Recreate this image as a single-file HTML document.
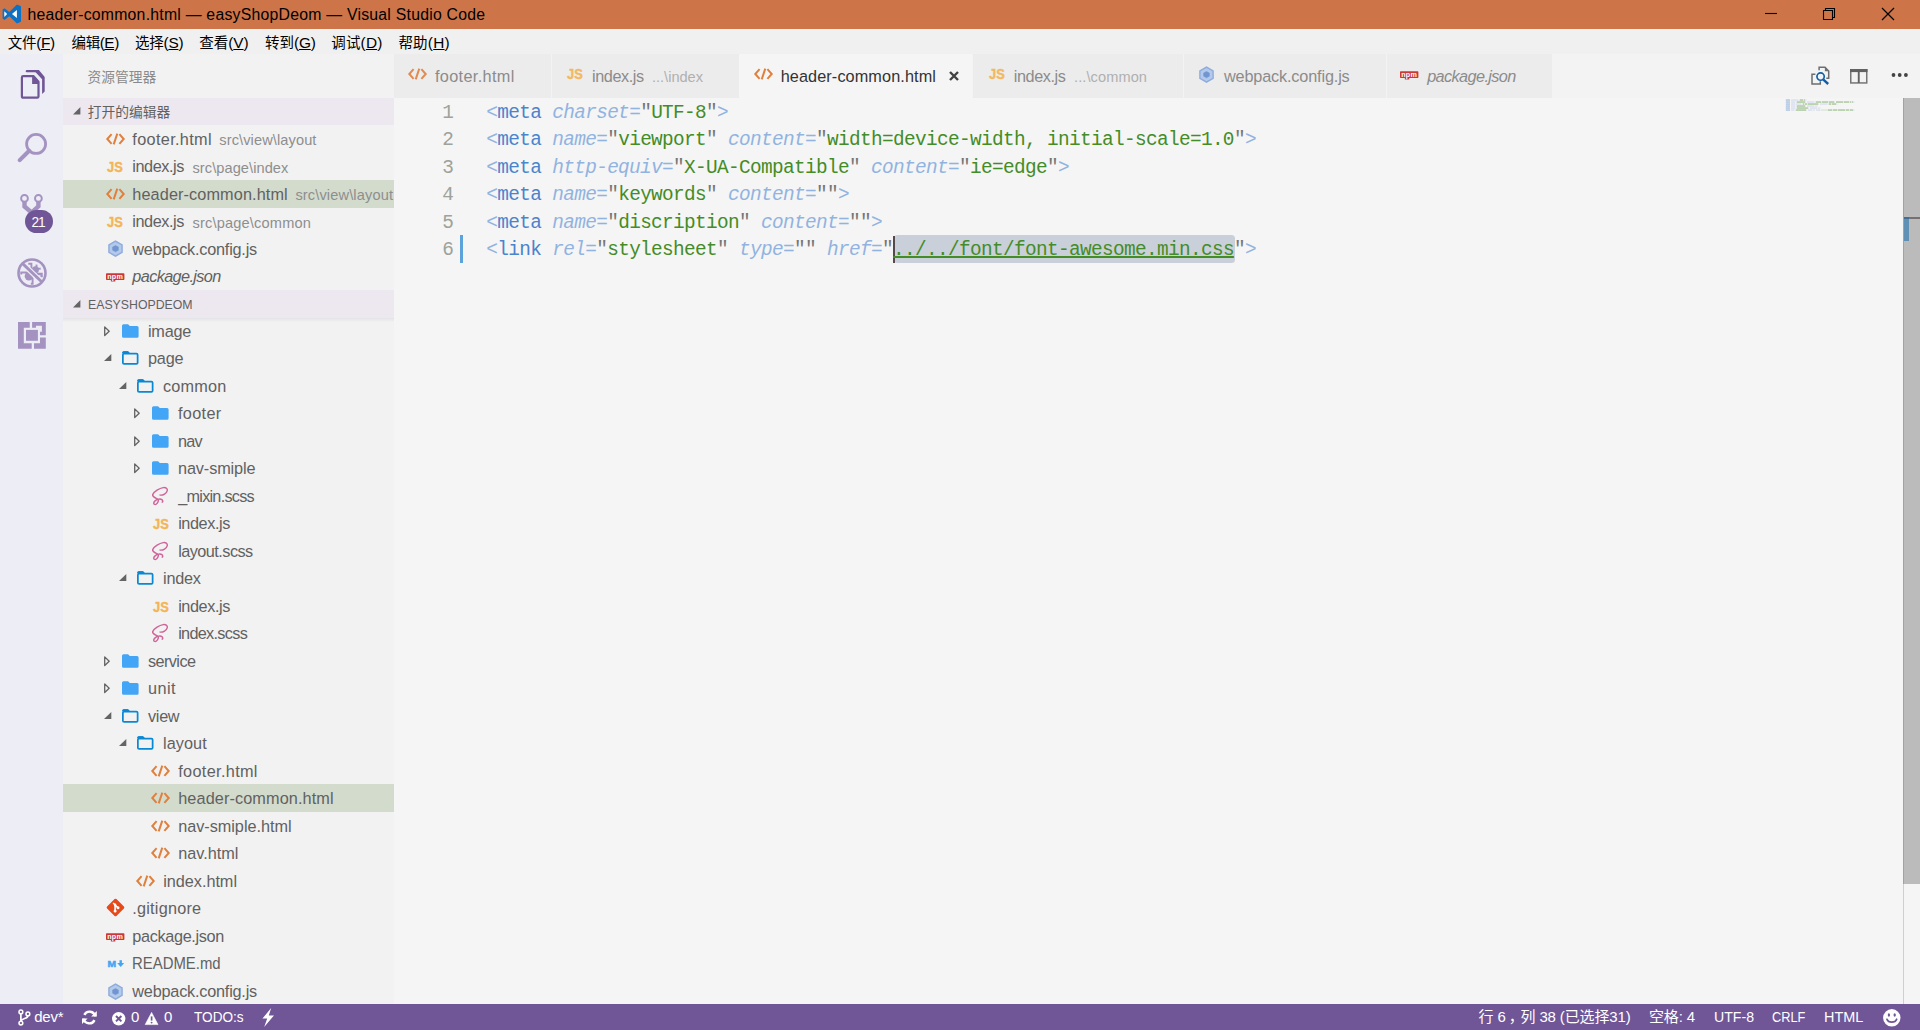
<!DOCTYPE html>
<html lang="zh-CN"><head><meta charset="utf-8"><title>header-common.html — easyShopDeom — Visual Studio Code</title>
<style>
html,body{margin:0;padding:0;}
body{width:1920px;height:1030px;overflow:hidden;position:relative;background:#f5f5f5;font-family:'Liberation Sans','Noto Sans CJK SC',sans-serif;}
.t{position:absolute;white-space:pre;line-height:1;}
svg{overflow:visible;display:block;}
u{text-decoration:underline;text-underline-offset:1px;}
</style></head><body>
<div style="position:absolute;left:0px;top:0px;width:1920px;height:29px;background:#cd7549;"></div>
<div style="position:absolute;left:0px;top:29px;width:1920px;height:25px;background:#f0f0f0;"></div>
<div style="position:absolute;left:0px;top:54px;width:63px;height:950px;background:#ededf5;"></div>
<div style="position:absolute;left:63px;top:54px;width:331px;height:950px;background:#f2f2f2;"></div>
<div style="position:absolute;left:394px;top:54px;width:1526px;height:44px;background:#f3f3f3;"></div>
<div style="position:absolute;left:394px;top:98px;width:1526px;height:906px;background:#f5f5f5;"></div>
<svg style="position:absolute;left:0px;top:0px;" width="24" height="28" viewBox="0 0 24 28"><path d="M16.9 4.5 L21 6.2 V21.7 L16.9 23.4 L9.3 16.2 L4.5 19.9 L2.6 18.6 V9.5 L4.5 8.2 L9.3 11.9 Z" fill="#0e72c4"/><path d="M16.9 10 V18 L12 14 Z M4.3 11.3 V16.9 L7.1 14.1 Z" fill="#fff"/></svg>
<svg style="position:absolute;left:1764px;top:7px;" width="14" height="14" viewBox="0 0 14 14"><path d="M1 6.5 H13" stroke="#000" stroke-width="1.1" fill="none"/></svg>
<svg style="position:absolute;left:1822px;top:7px;" width="14" height="14" viewBox="0 0 14 14"><path d="M1.5 3.5 H10.5 V12.5 H1.5 Z M3.5 3.5 V1.5 H12.5 V10.5 H10.5" stroke="#000" stroke-width="1.1" fill="none"/></svg>
<svg style="position:absolute;left:1881px;top:7px;" width="14" height="14" viewBox="0 0 14 14"><path d="M1 1 L13 13 M13 1 L1 13" stroke="#000" stroke-width="1.2" fill="none"/></svg>
<svg style="position:absolute;left:20px;top:69px;" width="26" height="31" viewBox="0 0 26 31"><path d="M6.8 2.2 H17" fill="none" stroke="#705697" stroke-width="2.2" stroke-linecap="round"/><path d="M15.6 1.1 H18.9 L24.7 7.9 V22.4 L22.1 24.9 V10.3 L15.6 3.3 Z" fill="#705697"/><path d="M3.2 7.1 H13.6 L18.5 12.7 V27.4 Q18.5 28.65 17.2 28.65 H3.2 Q1.9 28.65 1.9 27.4 V8.4 Q1.9 7.1 3.2 7.1 Z" fill="none" stroke="#705697" stroke-width="2.2" stroke-linejoin="round"/><path d="M12.1 7 H13.8 L19 12.8 V14.9 H12.1 Z" fill="#705697"/></svg>
<svg style="position:absolute;left:16px;top:132px;" width="32" height="32" viewBox="0 0 32 32"><circle cx="20.1" cy="11.95" r="9.5" fill="none" stroke="#a492c1" stroke-width="2.8"/><path d="M13.2 18.8 L3.7 28.1" stroke="#a492c1" stroke-width="4.1" stroke-linecap="round"/></svg>
<svg style="position:absolute;left:16px;top:190px;" width="32" height="32" viewBox="0 0 32 32"><path d="M8.5 11.6 V16.4 L15.6 22.6 V26 M22.4 11.6 V16.4 L15.6 22.6" fill="none" stroke="#a492c1" stroke-width="4.4" stroke-linejoin="miter"/><circle cx="8.5" cy="8.4" r="3.4" fill="#ededf5" stroke="#a492c1" stroke-width="1.9"/><circle cx="22.4" cy="8.4" r="3.4" fill="#ededf5" stroke="#a492c1" stroke-width="1.9"/></svg>
<div style="position:absolute;left:25px;top:209.9px;width:28px;height:22.8px;border-radius:11.4px;background:#705697;"></div>
<svg style="position:absolute;left:17px;top:257.8px;" width="30" height="30" viewBox="0 0 30 30"><g fill="none" stroke="#a492c1" stroke-width="1.9"><path d="M11.3 5.7 H14.4 V11"/><path d="M19.5 6.6 V10"/><path d="M20.2 10.7 H23.7"/><path d="M19.6 16 H24.6 V19.2" stroke-width="2.3"/><path d="M4.2 16.6 V14.5 H11"/><path d="M15.6 19.8 V25.7 H13.8"/></g><circle cx="11.9" cy="18.2" r="4.2" fill="#a492c1"/><circle cx="18.4" cy="11.8" r="3.5" fill="#a492c1"/><path d="M6 6 L24 23.4" stroke="#ededf5" stroke-width="5.4"/><path d="M5.4 5.4 L24.6 23.8" stroke="#a492c1" stroke-width="2.9"/><circle cx="15" cy="15" r="13.5" fill="none" stroke="#a492c1" stroke-width="2.6"/></svg>
<svg style="position:absolute;left:18.1px;top:322.1px;" width="27.8" height="26.7" viewBox="0 0 27.8 26.7"><path d="M0 0 H11.75 V5.8 H5.8 V21.15 H13.7 V26.7 H0 Z" fill="#a492c1"/><path d="M14.1 0 H27.8 V13.25 H22 V9.8 H23.9 V3.85 H17.95 V5.8 H14.1 Z" fill="#a492c1"/><path d="M22 15.4 H27.8 V26.7 H16 V21.15 H22 Z" fill="#a492c1"/><rect x="8" y="7.9" width="11.9" height="10.9" fill="#a492c1"/></svg>
<div style="position:absolute;left:63px;top:97.5px;width:331px;height:27.6px;background:#ede8ef;"></div>
<div style="position:absolute;left:63px;top:290px;width:331px;height:28px;background:#ede8ef;"></div>
<div style="position:absolute;left:63px;top:318px;width:331px;height:4px;background:linear-gradient(#e4e2e5,rgba(242,242,242,0));"></div>
<svg style="position:absolute;left:72.8px;top:107.4px;" width="8" height="8" viewBox="0 0 8 8"><path d="M7.4 0 V7.4 H0 Z" fill="#646465"/></svg>
<svg style="position:absolute;left:72.8px;top:299.6px;" width="8" height="8" viewBox="0 0 8 8"><path d="M7.4 0 V7.4 H0 Z" fill="#646465"/></svg>
<div style="position:absolute;left:63px;top:180px;width:331px;height:27.7px;background:#d3dbcd;"></div>
<svg style="position:absolute;left:105.6px;top:133.0px;" width="19" height="12" viewBox="0 0 19 12"><path d="M5.6 1.2 L1.3 6 L5.6 10.8 M13.4 1.2 L17.7 6 L13.4 10.8 M11.3 0.6 L7.7 11.4" fill="none" stroke="#e0803e" stroke-width="2" stroke-linejoin="miter"/></svg>
<svg style="position:absolute;left:105.6px;top:188.0px;" width="19" height="12" viewBox="0 0 19 12"><path d="M5.6 1.2 L1.3 6 L5.6 10.8 M13.4 1.2 L17.7 6 L13.4 10.8 M11.3 0.6 L7.7 11.4" fill="none" stroke="#e0803e" stroke-width="2" stroke-linejoin="miter"/></svg>
<svg style="position:absolute;left:107.6px;top:240.4px;" width="15" height="17.2" viewBox="0 0 15 17.2"><path d="M7.5 0.2 L14.8 4.4 V12.8 L7.5 17 L0.2 12.8 V4.4 Z" fill="#8eabdb"/><path d="M7.5 1.9 L13.4 5.3 V11.9 L7.5 15.3 L1.6 11.9 V5.3 Z" fill="#b4caeb"/><path d="M7.5 5.4 L10.4 7 V10.2 L7.5 11.8 L4.6 10.2 V7 Z" fill="#7195d3" stroke="#7195d3" stroke-width="0.5" stroke-linejoin="round"/></svg>
<svg style="position:absolute;left:105.6px;top:272.9px;" width="18.4" height="9" viewBox="0 0 19 9"><rect x="0" y="0" width="19" height="7.2" rx="0.8" fill="#cb3837"/><rect x="5" y="6.6" width="4.6" height="2" fill="#cb3837"/><text x="9.5" y="6.0" font-family="Liberation Sans,sans-serif" font-size="7.4" font-weight="bold" fill="#fff" text-anchor="middle" letter-spacing="0.3">npm</text></svg>
<div style="position:absolute;left:63px;top:784px;width:331px;height:28px;background:#d3dbcd;"></div>
<svg style="position:absolute;left:104.2px;top:326.0px;" width="6" height="11" viewBox="0 0 6 11"><path d="M0.7 0.9 L5.2 5.2 L0.7 9.5 Z" fill="none" stroke="#646465" stroke-width="1.3" stroke-linejoin="round"/></svg>
<svg style="position:absolute;left:121.69999999999999px;top:324.2px;" width="16.6" height="14" viewBox="0 0 17 14"><path d="M1.6 0 H6.2 L8 1.9 H15.4 Q17 1.9 17 3.5 V12.4 Q17 14 15.4 14 H1.6 Q0 14 0 12.4 V1.6 Q0 0 1.6 0 Z" fill="#42a5f5"/></svg>
<svg style="position:absolute;left:103.8px;top:353.7px;" width="8" height="8" viewBox="0 0 8 8"><path d="M7.3 0 V7 H0 Z" fill="#646465"/></svg>
<svg style="position:absolute;left:121.8px;top:351.2px;" width="16.5" height="14" viewBox="0 0 17 14"><path d="M1.4 0 H6.2 L8 2 H1 V1.4 Z" fill="#0b88d3"/><rect x="0.9" y="2.4" width="15.2" height="10.7" rx="1.2" fill="none" stroke="#0b88d3" stroke-width="1.8"/><path d="M0 1.6 Q0 0 1.6 0 H6.2 L8.2 2.2 H0 Z" fill="#0b88d3"/></svg>
<svg style="position:absolute;left:118.8px;top:381.7px;" width="8" height="8" viewBox="0 0 8 8"><path d="M7.3 0 V7 H0 Z" fill="#646465"/></svg>
<svg style="position:absolute;left:136.79999999999998px;top:379.2px;" width="16.5" height="14" viewBox="0 0 17 14"><path d="M1.4 0 H6.2 L8 2 H1 V1.4 Z" fill="#0b88d3"/><rect x="0.9" y="2.4" width="15.2" height="10.7" rx="1.2" fill="none" stroke="#0b88d3" stroke-width="1.8"/><path d="M0 1.6 Q0 0 1.6 0 H6.2 L8.2 2.2 H0 Z" fill="#0b88d3"/></svg>
<svg style="position:absolute;left:134.2px;top:408.0px;" width="6" height="11" viewBox="0 0 6 11"><path d="M0.7 0.9 L5.2 5.2 L0.7 9.5 Z" fill="none" stroke="#646465" stroke-width="1.3" stroke-linejoin="round"/></svg>
<svg style="position:absolute;left:151.7px;top:406.2px;" width="16.6" height="14" viewBox="0 0 17 14"><path d="M1.6 0 H6.2 L8 1.9 H15.4 Q17 1.9 17 3.5 V12.4 Q17 14 15.4 14 H1.6 Q0 14 0 12.4 V1.6 Q0 0 1.6 0 Z" fill="#42a5f5"/></svg>
<svg style="position:absolute;left:134.2px;top:436.0px;" width="6" height="11" viewBox="0 0 6 11"><path d="M0.7 0.9 L5.2 5.2 L0.7 9.5 Z" fill="none" stroke="#646465" stroke-width="1.3" stroke-linejoin="round"/></svg>
<svg style="position:absolute;left:151.7px;top:434.2px;" width="16.6" height="14" viewBox="0 0 17 14"><path d="M1.6 0 H6.2 L8 1.9 H15.4 Q17 1.9 17 3.5 V12.4 Q17 14 15.4 14 H1.6 Q0 14 0 12.4 V1.6 Q0 0 1.6 0 Z" fill="#42a5f5"/></svg>
<svg style="position:absolute;left:134.2px;top:463.0px;" width="6" height="11" viewBox="0 0 6 11"><path d="M0.7 0.9 L5.2 5.2 L0.7 9.5 Z" fill="none" stroke="#646465" stroke-width="1.3" stroke-linejoin="round"/></svg>
<svg style="position:absolute;left:151.7px;top:461.2px;" width="16.6" height="14" viewBox="0 0 17 14"><path d="M1.6 0 H6.2 L8 1.9 H15.4 Q17 1.9 17 3.5 V12.4 Q17 14 15.4 14 H1.6 Q0 14 0 12.4 V1.6 Q0 0 1.6 0 Z" fill="#42a5f5"/></svg>
<svg style="position:absolute;left:152.20000000000002px;top:487.09999999999997px;" width="16" height="18.4" viewBox="0 0 16 18.4"><path d="M8.1 8.1 C11 8.4 14.5 6.5 15.3 3.6 C15.8 1.2 13.5 0.2 11.2 0.6 C7.5 1.2 2 4.5 0.7 7.6 C0 9.8 3.8 11 6 12.4 C7 13.4 6 15.6 4.4 17 C3.4 17.8 1.8 17.6 1.7 16.2 C1.6 14.6 4 12.8 6 12.4 C8 11.6 10.6 12.2 10.8 14 C10.8 14.6 10.5 15 10.2 15.2" fill="none" stroke="#cf649a" stroke-width="1.45" stroke-linecap="round" stroke-linejoin="round"/></svg>
<svg style="position:absolute;left:152.20000000000002px;top:542.1px;" width="16" height="18.4" viewBox="0 0 16 18.4"><path d="M8.1 8.1 C11 8.4 14.5 6.5 15.3 3.6 C15.8 1.2 13.5 0.2 11.2 0.6 C7.5 1.2 2 4.5 0.7 7.6 C0 9.8 3.8 11 6 12.4 C7 13.4 6 15.6 4.4 17 C3.4 17.8 1.8 17.6 1.7 16.2 C1.6 14.6 4 12.8 6 12.4 C8 11.6 10.6 12.2 10.8 14 C10.8 14.6 10.5 15 10.2 15.2" fill="none" stroke="#cf649a" stroke-width="1.45" stroke-linecap="round" stroke-linejoin="round"/></svg>
<svg style="position:absolute;left:118.8px;top:573.7px;" width="8" height="8" viewBox="0 0 8 8"><path d="M7.3 0 V7 H0 Z" fill="#646465"/></svg>
<svg style="position:absolute;left:136.79999999999998px;top:571.2px;" width="16.5" height="14" viewBox="0 0 17 14"><path d="M1.4 0 H6.2 L8 2 H1 V1.4 Z" fill="#0b88d3"/><rect x="0.9" y="2.4" width="15.2" height="10.7" rx="1.2" fill="none" stroke="#0b88d3" stroke-width="1.8"/><path d="M0 1.6 Q0 0 1.6 0 H6.2 L8.2 2.2 H0 Z" fill="#0b88d3"/></svg>
<svg style="position:absolute;left:152.20000000000002px;top:624.1px;" width="16" height="18.4" viewBox="0 0 16 18.4"><path d="M8.1 8.1 C11 8.4 14.5 6.5 15.3 3.6 C15.8 1.2 13.5 0.2 11.2 0.6 C7.5 1.2 2 4.5 0.7 7.6 C0 9.8 3.8 11 6 12.4 C7 13.4 6 15.6 4.4 17 C3.4 17.8 1.8 17.6 1.7 16.2 C1.6 14.6 4 12.8 6 12.4 C8 11.6 10.6 12.2 10.8 14 C10.8 14.6 10.5 15 10.2 15.2" fill="none" stroke="#cf649a" stroke-width="1.45" stroke-linecap="round" stroke-linejoin="round"/></svg>
<svg style="position:absolute;left:104.2px;top:656.0px;" width="6" height="11" viewBox="0 0 6 11"><path d="M0.7 0.9 L5.2 5.2 L0.7 9.5 Z" fill="none" stroke="#646465" stroke-width="1.3" stroke-linejoin="round"/></svg>
<svg style="position:absolute;left:121.69999999999999px;top:654.2px;" width="16.6" height="14" viewBox="0 0 17 14"><path d="M1.6 0 H6.2 L8 1.9 H15.4 Q17 1.9 17 3.5 V12.4 Q17 14 15.4 14 H1.6 Q0 14 0 12.4 V1.6 Q0 0 1.6 0 Z" fill="#42a5f5"/></svg>
<svg style="position:absolute;left:104.2px;top:683.0px;" width="6" height="11" viewBox="0 0 6 11"><path d="M0.7 0.9 L5.2 5.2 L0.7 9.5 Z" fill="none" stroke="#646465" stroke-width="1.3" stroke-linejoin="round"/></svg>
<svg style="position:absolute;left:121.69999999999999px;top:681.2px;" width="16.6" height="14" viewBox="0 0 17 14"><path d="M1.6 0 H6.2 L8 1.9 H15.4 Q17 1.9 17 3.5 V12.4 Q17 14 15.4 14 H1.6 Q0 14 0 12.4 V1.6 Q0 0 1.6 0 Z" fill="#42a5f5"/></svg>
<svg style="position:absolute;left:103.8px;top:711.7px;" width="8" height="8" viewBox="0 0 8 8"><path d="M7.3 0 V7 H0 Z" fill="#646465"/></svg>
<svg style="position:absolute;left:121.8px;top:709.2px;" width="16.5" height="14" viewBox="0 0 17 14"><path d="M1.4 0 H6.2 L8 2 H1 V1.4 Z" fill="#0b88d3"/><rect x="0.9" y="2.4" width="15.2" height="10.7" rx="1.2" fill="none" stroke="#0b88d3" stroke-width="1.8"/><path d="M0 1.6 Q0 0 1.6 0 H6.2 L8.2 2.2 H0 Z" fill="#0b88d3"/></svg>
<svg style="position:absolute;left:118.8px;top:738.7px;" width="8" height="8" viewBox="0 0 8 8"><path d="M7.3 0 V7 H0 Z" fill="#646465"/></svg>
<svg style="position:absolute;left:136.79999999999998px;top:736.2px;" width="16.5" height="14" viewBox="0 0 17 14"><path d="M1.4 0 H6.2 L8 2 H1 V1.4 Z" fill="#0b88d3"/><rect x="0.9" y="2.4" width="15.2" height="10.7" rx="1.2" fill="none" stroke="#0b88d3" stroke-width="1.8"/><path d="M0 1.6 Q0 0 1.6 0 H6.2 L8.2 2.2 H0 Z" fill="#0b88d3"/></svg>
<svg style="position:absolute;left:150.70000000000002px;top:765.2px;" width="19" height="12" viewBox="0 0 19 12"><path d="M5.6 1.2 L1.3 6 L5.6 10.8 M13.4 1.2 L17.7 6 L13.4 10.8 M11.3 0.6 L7.7 11.4" fill="none" stroke="#e0803e" stroke-width="2" stroke-linejoin="miter"/></svg>
<svg style="position:absolute;left:150.70000000000002px;top:792.2px;" width="19" height="12" viewBox="0 0 19 12"><path d="M5.6 1.2 L1.3 6 L5.6 10.8 M13.4 1.2 L17.7 6 L13.4 10.8 M11.3 0.6 L7.7 11.4" fill="none" stroke="#e0803e" stroke-width="2" stroke-linejoin="miter"/></svg>
<svg style="position:absolute;left:150.70000000000002px;top:820.2px;" width="19" height="12" viewBox="0 0 19 12"><path d="M5.6 1.2 L1.3 6 L5.6 10.8 M13.4 1.2 L17.7 6 L13.4 10.8 M11.3 0.6 L7.7 11.4" fill="none" stroke="#e0803e" stroke-width="2" stroke-linejoin="miter"/></svg>
<svg style="position:absolute;left:150.70000000000002px;top:847.2px;" width="19" height="12" viewBox="0 0 19 12"><path d="M5.6 1.2 L1.3 6 L5.6 10.8 M13.4 1.2 L17.7 6 L13.4 10.8 M11.3 0.6 L7.7 11.4" fill="none" stroke="#e0803e" stroke-width="2" stroke-linejoin="miter"/></svg>
<svg style="position:absolute;left:135.70000000000002px;top:875.2px;" width="19" height="12" viewBox="0 0 19 12"><path d="M5.6 1.2 L1.3 6 L5.6 10.8 M13.4 1.2 L17.7 6 L13.4 10.8 M11.3 0.6 L7.7 11.4" fill="none" stroke="#e0803e" stroke-width="2" stroke-linejoin="miter"/></svg>
<svg style="position:absolute;left:105.6px;top:898.1px;" width="19" height="19" viewBox="0 0 19 19"><rect x="2.9" y="2.9" width="13.2" height="13.2" rx="1.3" transform="rotate(45 9.5 9.5)" fill="#e64a19"/><path d="M7.2 5 L11.9 9.7 M9.1 6.9 V13" stroke="#fff" stroke-width="1.6" fill="none"/><circle cx="9.1" cy="13.1" r="1.5" fill="#fff"/><circle cx="12" cy="9.8" r="1.5" fill="#fff"/><circle cx="9.1" cy="6.9" r="1.3" fill="#fff"/></svg>
<svg style="position:absolute;left:105.6px;top:932.6px;" width="18.4" height="9" viewBox="0 0 19 9"><rect x="0" y="0" width="19" height="7.2" rx="0.8" fill="#cb3837"/><rect x="5" y="6.6" width="4.6" height="2" fill="#cb3837"/><text x="9.5" y="6.0" font-family="Liberation Sans,sans-serif" font-size="7.4" font-weight="bold" fill="#fff" text-anchor="middle" letter-spacing="0.3">npm</text></svg>
<svg style="position:absolute;left:108.0px;top:960.4000000000001px;" width="16.4" height="7" viewBox="0 0 16.4 7"><text x="-0.5" y="7" font-family="Liberation Sans,sans-serif" font-size="9.8" font-weight="bold" fill="#42a5f5" stroke="#42a5f5" stroke-width="0.5" textLength="8.6" lengthAdjust="spacingAndGlyphs">M</text><path d="M12.7 0.2 V4.2" fill="none" stroke="#42a5f5" stroke-width="2.4"/><path d="M9.2 3 H16.2 L12.7 7 Z" fill="#42a5f5"/></svg>
<svg style="position:absolute;left:107.6px;top:982.6px;" width="15" height="17.2" viewBox="0 0 15 17.2"><path d="M7.5 0.2 L14.8 4.4 V12.8 L7.5 17 L0.2 12.8 V4.4 Z" fill="#8eabdb"/><path d="M7.5 1.9 L13.4 5.3 V11.9 L7.5 15.3 L1.6 11.9 V5.3 Z" fill="#b4caeb"/><path d="M7.5 5.4 L10.4 7 V10.2 L7.5 11.8 L4.6 10.2 V7 Z" fill="#7195d3" stroke="#7195d3" stroke-width="0.5" stroke-linejoin="round"/></svg>
<div style="position:absolute;left:394px;top:54px;width:157.2px;height:44px;background:#ececec;"></div>
<svg style="position:absolute;left:407.6px;top:68.2px;" width="19" height="12" viewBox="0 0 19 12"><path d="M5.6 1.2 L1.3 6 L5.6 10.8 M13.4 1.2 L17.7 6 L13.4 10.8 M11.3 0.6 L7.7 11.4" fill="none" stroke="#e28a50" stroke-width="2" stroke-linejoin="miter"/></svg>
<div style="position:absolute;left:552.2px;top:54px;width:186.8px;height:44px;background:#ececec;"></div>
<div style="position:absolute;left:739.3px;top:54px;width:233.2px;height:44px;background:#f5f5f5;"></div>
<svg style="position:absolute;left:753.9px;top:68.2px;" width="19" height="12" viewBox="0 0 19 12"><path d="M5.6 1.2 L1.3 6 L5.6 10.8 M13.4 1.2 L17.7 6 L13.4 10.8 M11.3 0.6 L7.7 11.4" fill="none" stroke="#e0803e" stroke-width="2" stroke-linejoin="miter"/></svg>
<div style="position:absolute;left:973px;top:54px;width:210px;height:44px;background:#ececec;"></div>
<div style="position:absolute;left:1184px;top:54px;width:202.2px;height:44px;background:#ececec;"></div>
<svg style="position:absolute;left:1199.2px;top:65.9px;" width="15" height="17.2" viewBox="0 0 15 17.2"><path d="M7.5 0.2 L14.8 4.4 V12.8 L7.5 17 L0.2 12.8 V4.4 Z" fill="#8eabdb"/><path d="M7.5 1.9 L13.4 5.3 V11.9 L7.5 15.3 L1.6 11.9 V5.3 Z" fill="#b4caeb"/><path d="M7.5 5.4 L10.4 7 V10.2 L7.5 11.8 L4.6 10.2 V7 Z" fill="#7195d3" stroke="#7195d3" stroke-width="0.5" stroke-linejoin="round"/></svg>
<div style="position:absolute;left:1387px;top:54px;width:164.6px;height:44px;background:#ececec;"></div>
<svg style="position:absolute;left:1399.8px;top:71.4px;" width="18.4" height="9" viewBox="0 0 19 9"><rect x="0" y="0" width="19" height="7.2" rx="0.8" fill="#cb3837"/><rect x="5" y="6.6" width="4.6" height="2" fill="#cb3837"/><text x="9.5" y="6.0" font-family="Liberation Sans,sans-serif" font-size="7.4" font-weight="bold" fill="#fff" text-anchor="middle" letter-spacing="0.3">npm</text></svg>
<svg style="position:absolute;left:948.2px;top:70.0px;" width="12" height="12" viewBox="0 0 12 12"><path d="M2 2 L10 10 M10 2 L2 10" stroke="#424242" stroke-width="2.4" fill="none"/></svg>
<svg style="position:absolute;left:1809px;top:65px;" width="22" height="22" viewBox="0 0 22 22"><path d="M10.1 5.3 V2.3 H16 L19.7 6.1 V13.3 H17.3" fill="none" stroke="#6e6e6e" stroke-width="1.5"/><path d="M15.9 2.3 V6.2 H19.7 Z" fill="#6e6e6e"/><path d="M6.4 9.3 H3 V18.9 H11.3 V16.2" fill="none" stroke="#6e6e6e" stroke-width="1.5"/><circle cx="11.6" cy="11.6" r="3.65" fill="none" stroke="#0f5fa8" stroke-width="1.7"/><path d="M14.4 14.6 L19.2 19" stroke="#0f5fa8" stroke-width="2.4"/></svg>
<svg style="position:absolute;left:1850.3px;top:68.6px;" width="17.5" height="14.7" viewBox="0 0 17.5 14.7"><rect x="0.75" y="0.75" width="16" height="13.2" fill="none" stroke="#767676" stroke-width="1.5"/><rect x="0" y="0" width="17.5" height="3.1" fill="#626262"/><rect x="7.8" y="2" width="1.9" height="12" fill="#626262"/></svg>
<svg style="position:absolute;left:1890px;top:72.2px;" width="20" height="6" viewBox="0 0 20 6"><circle cx="3.5" cy="3" r="1.9" fill="#424242"/><circle cx="9.7" cy="3" r="1.9" fill="#424242"/><circle cx="15.9" cy="3" r="1.9" fill="#424242"/></svg>
<div style="position:absolute;left:893.5px;top:235.2px;width:341px;height:27.4px;background:#c9d0d9;border-radius:3.5px;"></div>
<div style="position:absolute;left:892.8px;top:236px;width:2.4px;height:26.6px;background:#54494b;"></div>
<div style="position:absolute;left:460px;top:235px;width:3px;height:28px;background:#5ba3da;"></div>
<svg style="position:absolute;left:1785.4px;top:98.5px;" width="71" height="12" viewBox="0 0 71 12"><rect x="0" y="0.2" width="1" height="1.7" fill="#91b3e0" opacity="0.12"/><rect x="1" y="0.2" width="1" height="1.7" fill="#4b83cd" opacity="0.36"/><rect x="2" y="0.2" width="1" height="1.7" fill="#4b83cd" opacity="0.36"/><rect x="3" y="0.2" width="1" height="1.7" fill="#4b83cd" opacity="0.36"/><rect x="4" y="0.2" width="1" height="1.7" fill="#4b83cd" opacity="0.36"/><rect x="6" y="0.2" width="1" height="1.7" fill="#91b3e0" opacity="0.26"/><rect x="7" y="0.2" width="1" height="1.7" fill="#91b3e0" opacity="0.26"/><rect x="8" y="0.2" width="1" height="1.7" fill="#91b3e0" opacity="0.26"/><rect x="9" y="0.2" width="1" height="1.7" fill="#91b3e0" opacity="0.26"/><rect x="10" y="0.2" width="1" height="1.7" fill="#91b3e0" opacity="0.26"/><rect x="11" y="0.2" width="1" height="1.7" fill="#91b3e0" opacity="0.26"/><rect x="12" y="0.2" width="1" height="1.7" fill="#91b3e0" opacity="0.26"/><rect x="13" y="0.2" width="1" height="1.7" fill="#91b3e0" opacity="0.12"/><rect x="14" y="0.2" width="1" height="1.7" fill="#777777" opacity="0.12"/><rect x="15" y="0.2" width="1" height="1.7" fill="#448c27" opacity="0.36"/><rect x="16" y="0.2" width="1" height="1.7" fill="#448c27" opacity="0.36"/><rect x="17" y="0.2" width="1" height="1.7" fill="#448c27" opacity="0.36"/><rect x="18" y="0.2" width="1" height="1.7" fill="#448c27" opacity="0.12"/><rect x="19" y="0.2" width="1" height="1.7" fill="#448c27" opacity="0.36"/><rect x="20" y="0.2" width="1" height="1.7" fill="#777777" opacity="0.12"/><rect x="21" y="0.2" width="1" height="1.7" fill="#91b3e0" opacity="0.12"/><rect x="0" y="2.2" width="1" height="1.7" fill="#91b3e0" opacity="0.12"/><rect x="1" y="2.2" width="1" height="1.7" fill="#4b83cd" opacity="0.36"/><rect x="2" y="2.2" width="1" height="1.7" fill="#4b83cd" opacity="0.36"/><rect x="3" y="2.2" width="1" height="1.7" fill="#4b83cd" opacity="0.36"/><rect x="4" y="2.2" width="1" height="1.7" fill="#4b83cd" opacity="0.36"/><rect x="6" y="2.2" width="1" height="1.7" fill="#91b3e0" opacity="0.26"/><rect x="7" y="2.2" width="1" height="1.7" fill="#91b3e0" opacity="0.26"/><rect x="8" y="2.2" width="1" height="1.7" fill="#91b3e0" opacity="0.26"/><rect x="9" y="2.2" width="1" height="1.7" fill="#91b3e0" opacity="0.26"/><rect x="10" y="2.2" width="1" height="1.7" fill="#91b3e0" opacity="0.12"/><rect x="11" y="2.2" width="1" height="1.7" fill="#777777" opacity="0.12"/><rect x="12" y="2.2" width="1" height="1.7" fill="#448c27" opacity="0.36"/><rect x="13" y="2.2" width="1" height="1.7" fill="#448c27" opacity="0.36"/><rect x="14" y="2.2" width="1" height="1.7" fill="#448c27" opacity="0.36"/><rect x="15" y="2.2" width="1" height="1.7" fill="#448c27" opacity="0.36"/><rect x="16" y="2.2" width="1" height="1.7" fill="#448c27" opacity="0.36"/><rect x="17" y="2.2" width="1" height="1.7" fill="#448c27" opacity="0.36"/><rect x="18" y="2.2" width="1" height="1.7" fill="#448c27" opacity="0.36"/><rect x="19" y="2.2" width="1" height="1.7" fill="#448c27" opacity="0.36"/><rect x="20" y="2.2" width="1" height="1.7" fill="#777777" opacity="0.12"/><rect x="22" y="2.2" width="1" height="1.7" fill="#91b3e0" opacity="0.26"/><rect x="23" y="2.2" width="1" height="1.7" fill="#91b3e0" opacity="0.26"/><rect x="24" y="2.2" width="1" height="1.7" fill="#91b3e0" opacity="0.26"/><rect x="25" y="2.2" width="1" height="1.7" fill="#91b3e0" opacity="0.26"/><rect x="26" y="2.2" width="1" height="1.7" fill="#91b3e0" opacity="0.26"/><rect x="27" y="2.2" width="1" height="1.7" fill="#91b3e0" opacity="0.26"/><rect x="28" y="2.2" width="1" height="1.7" fill="#91b3e0" opacity="0.26"/><rect x="29" y="2.2" width="1" height="1.7" fill="#91b3e0" opacity="0.12"/><rect x="30" y="2.2" width="1" height="1.7" fill="#777777" opacity="0.12"/><rect x="31" y="2.2" width="1" height="1.7" fill="#448c27" opacity="0.36"/><rect x="32" y="2.2" width="1" height="1.7" fill="#448c27" opacity="0.36"/><rect x="33" y="2.2" width="1" height="1.7" fill="#448c27" opacity="0.36"/><rect x="34" y="2.2" width="1" height="1.7" fill="#448c27" opacity="0.36"/><rect x="35" y="2.2" width="1" height="1.7" fill="#448c27" opacity="0.36"/><rect x="36" y="2.2" width="1" height="1.7" fill="#448c27" opacity="0.12"/><rect x="37" y="2.2" width="1" height="1.7" fill="#448c27" opacity="0.36"/><rect x="38" y="2.2" width="1" height="1.7" fill="#448c27" opacity="0.36"/><rect x="39" y="2.2" width="1" height="1.7" fill="#448c27" opacity="0.36"/><rect x="40" y="2.2" width="1" height="1.7" fill="#448c27" opacity="0.36"/><rect x="41" y="2.2" width="1" height="1.7" fill="#448c27" opacity="0.36"/><rect x="42" y="2.2" width="1" height="1.7" fill="#448c27" opacity="0.36"/><rect x="43" y="2.2" width="1" height="1.7" fill="#448c27" opacity="0.12"/><rect x="44" y="2.2" width="1" height="1.7" fill="#448c27" opacity="0.36"/><rect x="45" y="2.2" width="1" height="1.7" fill="#448c27" opacity="0.36"/><rect x="46" y="2.2" width="1" height="1.7" fill="#448c27" opacity="0.36"/><rect x="47" y="2.2" width="1" height="1.7" fill="#448c27" opacity="0.36"/><rect x="48" y="2.2" width="1" height="1.7" fill="#448c27" opacity="0.36"/><rect x="49" y="2.2" width="1" height="1.7" fill="#448c27" opacity="0.12"/><rect x="51" y="2.2" width="1" height="1.7" fill="#448c27" opacity="0.36"/><rect x="52" y="2.2" width="1" height="1.7" fill="#448c27" opacity="0.36"/><rect x="53" y="2.2" width="1" height="1.7" fill="#448c27" opacity="0.36"/><rect x="54" y="2.2" width="1" height="1.7" fill="#448c27" opacity="0.36"/><rect x="55" y="2.2" width="1" height="1.7" fill="#448c27" opacity="0.36"/><rect x="56" y="2.2" width="1" height="1.7" fill="#448c27" opacity="0.36"/><rect x="57" y="2.2" width="1" height="1.7" fill="#448c27" opacity="0.36"/><rect x="58" y="2.2" width="1" height="1.7" fill="#448c27" opacity="0.12"/><rect x="59" y="2.2" width="1" height="1.7" fill="#448c27" opacity="0.36"/><rect x="60" y="2.2" width="1" height="1.7" fill="#448c27" opacity="0.36"/><rect x="61" y="2.2" width="1" height="1.7" fill="#448c27" opacity="0.36"/><rect x="62" y="2.2" width="1" height="1.7" fill="#448c27" opacity="0.36"/><rect x="63" y="2.2" width="1" height="1.7" fill="#448c27" opacity="0.36"/><rect x="64" y="2.2" width="1" height="1.7" fill="#448c27" opacity="0.12"/><rect x="65" y="2.2" width="1" height="1.7" fill="#448c27" opacity="0.36"/><rect x="66" y="2.2" width="1" height="1.7" fill="#448c27" opacity="0.12"/><rect x="67" y="2.2" width="1" height="1.7" fill="#448c27" opacity="0.36"/><rect x="68" y="2.2" width="1" height="1.7" fill="#777777" opacity="0.12"/><rect x="69" y="2.2" width="1" height="1.7" fill="#91b3e0" opacity="0.12"/><rect x="0" y="4.2" width="1" height="1.7" fill="#91b3e0" opacity="0.12"/><rect x="1" y="4.2" width="1" height="1.7" fill="#4b83cd" opacity="0.36"/><rect x="2" y="4.2" width="1" height="1.7" fill="#4b83cd" opacity="0.36"/><rect x="3" y="4.2" width="1" height="1.7" fill="#4b83cd" opacity="0.36"/><rect x="4" y="4.2" width="1" height="1.7" fill="#4b83cd" opacity="0.36"/><rect x="6" y="4.2" width="1" height="1.7" fill="#91b3e0" opacity="0.26"/><rect x="7" y="4.2" width="1" height="1.7" fill="#91b3e0" opacity="0.26"/><rect x="8" y="4.2" width="1" height="1.7" fill="#91b3e0" opacity="0.26"/><rect x="9" y="4.2" width="1" height="1.7" fill="#91b3e0" opacity="0.26"/><rect x="10" y="4.2" width="1" height="1.7" fill="#91b3e0" opacity="0.12"/><rect x="11" y="4.2" width="1" height="1.7" fill="#91b3e0" opacity="0.26"/><rect x="12" y="4.2" width="1" height="1.7" fill="#91b3e0" opacity="0.26"/><rect x="13" y="4.2" width="1" height="1.7" fill="#91b3e0" opacity="0.26"/><rect x="14" y="4.2" width="1" height="1.7" fill="#91b3e0" opacity="0.26"/><rect x="15" y="4.2" width="1" height="1.7" fill="#91b3e0" opacity="0.26"/><rect x="16" y="4.2" width="1" height="1.7" fill="#91b3e0" opacity="0.12"/><rect x="17" y="4.2" width="1" height="1.7" fill="#777777" opacity="0.12"/><rect x="18" y="4.2" width="1" height="1.7" fill="#448c27" opacity="0.36"/><rect x="19" y="4.2" width="1" height="1.7" fill="#448c27" opacity="0.12"/><rect x="20" y="4.2" width="1" height="1.7" fill="#448c27" opacity="0.36"/><rect x="21" y="4.2" width="1" height="1.7" fill="#448c27" opacity="0.36"/><rect x="22" y="4.2" width="1" height="1.7" fill="#448c27" opacity="0.12"/><rect x="23" y="4.2" width="1" height="1.7" fill="#448c27" opacity="0.36"/><rect x="24" y="4.2" width="1" height="1.7" fill="#448c27" opacity="0.36"/><rect x="25" y="4.2" width="1" height="1.7" fill="#448c27" opacity="0.36"/><rect x="26" y="4.2" width="1" height="1.7" fill="#448c27" opacity="0.36"/><rect x="27" y="4.2" width="1" height="1.7" fill="#448c27" opacity="0.36"/><rect x="28" y="4.2" width="1" height="1.7" fill="#448c27" opacity="0.36"/><rect x="29" y="4.2" width="1" height="1.7" fill="#448c27" opacity="0.36"/><rect x="30" y="4.2" width="1" height="1.7" fill="#448c27" opacity="0.36"/><rect x="31" y="4.2" width="1" height="1.7" fill="#448c27" opacity="0.36"/><rect x="32" y="4.2" width="1" height="1.7" fill="#448c27" opacity="0.36"/><rect x="33" y="4.2" width="1" height="1.7" fill="#777777" opacity="0.12"/><rect x="35" y="4.2" width="1" height="1.7" fill="#91b3e0" opacity="0.26"/><rect x="36" y="4.2" width="1" height="1.7" fill="#91b3e0" opacity="0.26"/><rect x="37" y="4.2" width="1" height="1.7" fill="#91b3e0" opacity="0.26"/><rect x="38" y="4.2" width="1" height="1.7" fill="#91b3e0" opacity="0.26"/><rect x="39" y="4.2" width="1" height="1.7" fill="#91b3e0" opacity="0.26"/><rect x="40" y="4.2" width="1" height="1.7" fill="#91b3e0" opacity="0.26"/><rect x="41" y="4.2" width="1" height="1.7" fill="#91b3e0" opacity="0.26"/><rect x="42" y="4.2" width="1" height="1.7" fill="#91b3e0" opacity="0.12"/><rect x="43" y="4.2" width="1" height="1.7" fill="#777777" opacity="0.12"/><rect x="44" y="4.2" width="1" height="1.7" fill="#448c27" opacity="0.36"/><rect x="45" y="4.2" width="1" height="1.7" fill="#448c27" opacity="0.36"/><rect x="46" y="4.2" width="1" height="1.7" fill="#448c27" opacity="0.12"/><rect x="47" y="4.2" width="1" height="1.7" fill="#448c27" opacity="0.36"/><rect x="48" y="4.2" width="1" height="1.7" fill="#448c27" opacity="0.36"/><rect x="49" y="4.2" width="1" height="1.7" fill="#448c27" opacity="0.36"/><rect x="50" y="4.2" width="1" height="1.7" fill="#448c27" opacity="0.36"/><rect x="51" y="4.2" width="1" height="1.7" fill="#777777" opacity="0.12"/><rect x="52" y="4.2" width="1" height="1.7" fill="#91b3e0" opacity="0.12"/><rect x="0" y="6.2" width="1" height="1.7" fill="#91b3e0" opacity="0.12"/><rect x="1" y="6.2" width="1" height="1.7" fill="#4b83cd" opacity="0.36"/><rect x="2" y="6.2" width="1" height="1.7" fill="#4b83cd" opacity="0.36"/><rect x="3" y="6.2" width="1" height="1.7" fill="#4b83cd" opacity="0.36"/><rect x="4" y="6.2" width="1" height="1.7" fill="#4b83cd" opacity="0.36"/><rect x="6" y="6.2" width="1" height="1.7" fill="#91b3e0" opacity="0.26"/><rect x="7" y="6.2" width="1" height="1.7" fill="#91b3e0" opacity="0.26"/><rect x="8" y="6.2" width="1" height="1.7" fill="#91b3e0" opacity="0.26"/><rect x="9" y="6.2" width="1" height="1.7" fill="#91b3e0" opacity="0.26"/><rect x="10" y="6.2" width="1" height="1.7" fill="#91b3e0" opacity="0.12"/><rect x="11" y="6.2" width="1" height="1.7" fill="#777777" opacity="0.12"/><rect x="12" y="6.2" width="1" height="1.7" fill="#448c27" opacity="0.36"/><rect x="13" y="6.2" width="1" height="1.7" fill="#448c27" opacity="0.36"/><rect x="14" y="6.2" width="1" height="1.7" fill="#448c27" opacity="0.36"/><rect x="15" y="6.2" width="1" height="1.7" fill="#448c27" opacity="0.36"/><rect x="16" y="6.2" width="1" height="1.7" fill="#448c27" opacity="0.36"/><rect x="17" y="6.2" width="1" height="1.7" fill="#448c27" opacity="0.36"/><rect x="18" y="6.2" width="1" height="1.7" fill="#448c27" opacity="0.36"/><rect x="19" y="6.2" width="1" height="1.7" fill="#448c27" opacity="0.36"/><rect x="20" y="6.2" width="1" height="1.7" fill="#777777" opacity="0.12"/><rect x="22" y="6.2" width="1" height="1.7" fill="#91b3e0" opacity="0.26"/><rect x="23" y="6.2" width="1" height="1.7" fill="#91b3e0" opacity="0.26"/><rect x="24" y="6.2" width="1" height="1.7" fill="#91b3e0" opacity="0.26"/><rect x="25" y="6.2" width="1" height="1.7" fill="#91b3e0" opacity="0.26"/><rect x="26" y="6.2" width="1" height="1.7" fill="#91b3e0" opacity="0.26"/><rect x="27" y="6.2" width="1" height="1.7" fill="#91b3e0" opacity="0.26"/><rect x="28" y="6.2" width="1" height="1.7" fill="#91b3e0" opacity="0.26"/><rect x="29" y="6.2" width="1" height="1.7" fill="#91b3e0" opacity="0.12"/><rect x="30" y="6.2" width="1" height="1.7" fill="#777777" opacity="0.12"/><rect x="31" y="6.2" width="1" height="1.7" fill="#777777" opacity="0.12"/><rect x="32" y="6.2" width="1" height="1.7" fill="#91b3e0" opacity="0.12"/><rect x="0" y="8.2" width="1" height="1.7" fill="#91b3e0" opacity="0.12"/><rect x="1" y="8.2" width="1" height="1.7" fill="#4b83cd" opacity="0.36"/><rect x="2" y="8.2" width="1" height="1.7" fill="#4b83cd" opacity="0.36"/><rect x="3" y="8.2" width="1" height="1.7" fill="#4b83cd" opacity="0.36"/><rect x="4" y="8.2" width="1" height="1.7" fill="#4b83cd" opacity="0.36"/><rect x="6" y="8.2" width="1" height="1.7" fill="#91b3e0" opacity="0.26"/><rect x="7" y="8.2" width="1" height="1.7" fill="#91b3e0" opacity="0.26"/><rect x="8" y="8.2" width="1" height="1.7" fill="#91b3e0" opacity="0.26"/><rect x="9" y="8.2" width="1" height="1.7" fill="#91b3e0" opacity="0.26"/><rect x="10" y="8.2" width="1" height="1.7" fill="#91b3e0" opacity="0.12"/><rect x="11" y="8.2" width="1" height="1.7" fill="#777777" opacity="0.12"/><rect x="12" y="8.2" width="1" height="1.7" fill="#448c27" opacity="0.36"/><rect x="13" y="8.2" width="1" height="1.7" fill="#448c27" opacity="0.36"/><rect x="14" y="8.2" width="1" height="1.7" fill="#448c27" opacity="0.36"/><rect x="15" y="8.2" width="1" height="1.7" fill="#448c27" opacity="0.36"/><rect x="16" y="8.2" width="1" height="1.7" fill="#448c27" opacity="0.36"/><rect x="17" y="8.2" width="1" height="1.7" fill="#448c27" opacity="0.36"/><rect x="18" y="8.2" width="1" height="1.7" fill="#448c27" opacity="0.36"/><rect x="19" y="8.2" width="1" height="1.7" fill="#448c27" opacity="0.36"/><rect x="20" y="8.2" width="1" height="1.7" fill="#448c27" opacity="0.36"/><rect x="21" y="8.2" width="1" height="1.7" fill="#448c27" opacity="0.36"/><rect x="22" y="8.2" width="1" height="1.7" fill="#448c27" opacity="0.36"/><rect x="23" y="8.2" width="1" height="1.7" fill="#777777" opacity="0.12"/><rect x="25" y="8.2" width="1" height="1.7" fill="#91b3e0" opacity="0.26"/><rect x="26" y="8.2" width="1" height="1.7" fill="#91b3e0" opacity="0.26"/><rect x="27" y="8.2" width="1" height="1.7" fill="#91b3e0" opacity="0.26"/><rect x="28" y="8.2" width="1" height="1.7" fill="#91b3e0" opacity="0.26"/><rect x="29" y="8.2" width="1" height="1.7" fill="#91b3e0" opacity="0.26"/><rect x="30" y="8.2" width="1" height="1.7" fill="#91b3e0" opacity="0.26"/><rect x="31" y="8.2" width="1" height="1.7" fill="#91b3e0" opacity="0.26"/><rect x="32" y="8.2" width="1" height="1.7" fill="#91b3e0" opacity="0.12"/><rect x="33" y="8.2" width="1" height="1.7" fill="#777777" opacity="0.12"/><rect x="34" y="8.2" width="1" height="1.7" fill="#777777" opacity="0.12"/><rect x="35" y="8.2" width="1" height="1.7" fill="#91b3e0" opacity="0.12"/><rect x="0" y="10.2" width="1" height="1.7" fill="#91b3e0" opacity="0.12"/><rect x="1" y="10.2" width="1" height="1.7" fill="#4b83cd" opacity="0.36"/><rect x="2" y="10.2" width="1" height="1.7" fill="#4b83cd" opacity="0.36"/><rect x="3" y="10.2" width="1" height="1.7" fill="#4b83cd" opacity="0.36"/><rect x="4" y="10.2" width="1" height="1.7" fill="#4b83cd" opacity="0.36"/><rect x="6" y="10.2" width="1" height="1.7" fill="#91b3e0" opacity="0.26"/><rect x="7" y="10.2" width="1" height="1.7" fill="#91b3e0" opacity="0.26"/><rect x="8" y="10.2" width="1" height="1.7" fill="#91b3e0" opacity="0.26"/><rect x="9" y="10.2" width="1" height="1.7" fill="#91b3e0" opacity="0.12"/><rect x="10" y="10.2" width="1" height="1.7" fill="#777777" opacity="0.12"/><rect x="11" y="10.2" width="1" height="1.7" fill="#448c27" opacity="0.36"/><rect x="12" y="10.2" width="1" height="1.7" fill="#448c27" opacity="0.36"/><rect x="13" y="10.2" width="1" height="1.7" fill="#448c27" opacity="0.36"/><rect x="14" y="10.2" width="1" height="1.7" fill="#448c27" opacity="0.36"/><rect x="15" y="10.2" width="1" height="1.7" fill="#448c27" opacity="0.36"/><rect x="16" y="10.2" width="1" height="1.7" fill="#448c27" opacity="0.36"/><rect x="17" y="10.2" width="1" height="1.7" fill="#448c27" opacity="0.36"/><rect x="18" y="10.2" width="1" height="1.7" fill="#448c27" opacity="0.36"/><rect x="19" y="10.2" width="1" height="1.7" fill="#448c27" opacity="0.36"/><rect x="20" y="10.2" width="1" height="1.7" fill="#448c27" opacity="0.36"/><rect x="21" y="10.2" width="1" height="1.7" fill="#777777" opacity="0.12"/><rect x="23" y="10.2" width="1" height="1.7" fill="#91b3e0" opacity="0.26"/><rect x="24" y="10.2" width="1" height="1.7" fill="#91b3e0" opacity="0.26"/><rect x="25" y="10.2" width="1" height="1.7" fill="#91b3e0" opacity="0.26"/><rect x="26" y="10.2" width="1" height="1.7" fill="#91b3e0" opacity="0.26"/><rect x="27" y="10.2" width="1" height="1.7" fill="#91b3e0" opacity="0.12"/><rect x="28" y="10.2" width="1" height="1.7" fill="#777777" opacity="0.12"/><rect x="29" y="10.2" width="1" height="1.7" fill="#777777" opacity="0.12"/><rect x="31" y="10.2" width="1" height="1.7" fill="#91b3e0" opacity="0.26"/><rect x="32" y="10.2" width="1" height="1.7" fill="#91b3e0" opacity="0.26"/><rect x="33" y="10.2" width="1" height="1.7" fill="#91b3e0" opacity="0.26"/><rect x="34" y="10.2" width="1" height="1.7" fill="#91b3e0" opacity="0.26"/><rect x="35" y="10.2" width="1" height="1.7" fill="#91b3e0" opacity="0.12"/><rect x="36" y="10.2" width="1" height="1.7" fill="#777777" opacity="0.12"/><rect x="37" y="10.2" width="1" height="1.7" fill="#448c27" opacity="0.12"/><rect x="38" y="10.2" width="1" height="1.7" fill="#448c27" opacity="0.12"/><rect x="39" y="10.2" width="1" height="1.7" fill="#448c27" opacity="0.12"/><rect x="40" y="10.2" width="1" height="1.7" fill="#448c27" opacity="0.12"/><rect x="41" y="10.2" width="1" height="1.7" fill="#448c27" opacity="0.12"/><rect x="42" y="10.2" width="1" height="1.7" fill="#448c27" opacity="0.12"/><rect x="43" y="10.2" width="1" height="1.7" fill="#448c27" opacity="0.36"/><rect x="44" y="10.2" width="1" height="1.7" fill="#448c27" opacity="0.36"/><rect x="45" y="10.2" width="1" height="1.7" fill="#448c27" opacity="0.36"/><rect x="46" y="10.2" width="1" height="1.7" fill="#448c27" opacity="0.36"/><rect x="47" y="10.2" width="1" height="1.7" fill="#448c27" opacity="0.12"/><rect x="48" y="10.2" width="1" height="1.7" fill="#448c27" opacity="0.36"/><rect x="49" y="10.2" width="1" height="1.7" fill="#448c27" opacity="0.36"/><rect x="50" y="10.2" width="1" height="1.7" fill="#448c27" opacity="0.36"/><rect x="51" y="10.2" width="1" height="1.7" fill="#448c27" opacity="0.36"/><rect x="52" y="10.2" width="1" height="1.7" fill="#448c27" opacity="0.12"/><rect x="53" y="10.2" width="1" height="1.7" fill="#448c27" opacity="0.36"/><rect x="54" y="10.2" width="1" height="1.7" fill="#448c27" opacity="0.36"/><rect x="55" y="10.2" width="1" height="1.7" fill="#448c27" opacity="0.36"/><rect x="56" y="10.2" width="1" height="1.7" fill="#448c27" opacity="0.36"/><rect x="57" y="10.2" width="1" height="1.7" fill="#448c27" opacity="0.36"/><rect x="58" y="10.2" width="1" height="1.7" fill="#448c27" opacity="0.36"/><rect x="59" y="10.2" width="1" height="1.7" fill="#448c27" opacity="0.36"/><rect x="60" y="10.2" width="1" height="1.7" fill="#448c27" opacity="0.12"/><rect x="61" y="10.2" width="1" height="1.7" fill="#448c27" opacity="0.36"/><rect x="62" y="10.2" width="1" height="1.7" fill="#448c27" opacity="0.36"/><rect x="63" y="10.2" width="1" height="1.7" fill="#448c27" opacity="0.36"/><rect x="64" y="10.2" width="1" height="1.7" fill="#448c27" opacity="0.12"/><rect x="65" y="10.2" width="1" height="1.7" fill="#448c27" opacity="0.36"/><rect x="66" y="10.2" width="1" height="1.7" fill="#448c27" opacity="0.36"/><rect x="67" y="10.2" width="1" height="1.7" fill="#448c27" opacity="0.36"/><rect x="68" y="10.2" width="1" height="1.7" fill="#777777" opacity="0.12"/><rect x="69" y="10.2" width="1" height="1.7" fill="#91b3e0" opacity="0.12"/></svg>
<div style="position:absolute;left:1903px;top:98px;width:1px;height:906px;background:#cfcfcf;"></div>
<div style="position:absolute;left:1903px;top:98px;width:17px;height:786px;background:#bbbbbb;"></div>
<div style="position:absolute;left:1903px;top:98px;width:1px;height:786px;background:#a2a2a2;"></div>
<div style="position:absolute;left:1904px;top:217px;width:5px;height:24px;background:#6090b4;"></div>
<div style="position:absolute;left:1909px;top:217px;width:11px;height:2px;background:#777071;"></div>
<div style="position:absolute;left:1904px;top:217px;width:5px;height:2px;background:#3f6f97;"></div>
<div style="position:absolute;left:0px;top:1003.6px;width:1920px;height:27px;background:#705697;"></div>
<svg style="position:absolute;left:18px;top:1008.6px;" width="13" height="17" viewBox="0 0 13 17"><circle cx="2.9" cy="2.9" r="1.9" fill="none" stroke="#ffffff" stroke-width="1.5"/><circle cx="2.9" cy="14.1" r="1.9" fill="none" stroke="#ffffff" stroke-width="1.5"/><circle cx="9.9" cy="4.9" r="1.9" fill="none" stroke="#ffffff" stroke-width="1.5"/><path d="M2.9 4.8 V12.2 M9.9 6.8 C9.9 10 3.6 9 2.9 12.2" fill="none" stroke="#ffffff" stroke-width="1.7"/></svg>
<svg style="position:absolute;left:82.3px;top:1010.0px;" width="15" height="15" viewBox="0 0 15 15"><path d="M13.2 6.4 A5.8 5.8 0 0 0 2.3 4.9" fill="none" stroke="#ffffff" stroke-width="2.4"/><path d="M1.6 8.6 A5.8 5.8 0 0 0 12.5 10.1" fill="none" stroke="#ffffff" stroke-width="2.4"/><path d="M9.2 6.6 H14.8 V1 Z" fill="#ffffff"/><path d="M5.6 8.4 H0 V14 Z" fill="#ffffff"/></svg>
<svg style="position:absolute;left:111.6px;top:1011.6px;" width="14" height="14" viewBox="0 0 14 14"><circle cx="6.7" cy="6.7" r="6.7" fill="#ffffff"/><path d="M4 4 L9.4 9.4 M9.4 4 L4 9.4" stroke="#705697" stroke-width="2"/></svg>
<svg style="position:absolute;left:145px;top:1011.8px;" width="14" height="13" viewBox="0 0 14 13"><path d="M6.6 0.4 L13 12.6 H0.2 Z" fill="#ffffff" stroke="#ffffff" stroke-width="0.6" stroke-linejoin="round"/><path d="M6.6 4.4 V8.6" stroke="#705697" stroke-width="1.7"/><circle cx="6.6" cy="10.6" r="0.95" fill="#705697"/></svg>
<svg style="position:absolute;left:262px;top:1007.9px;" width="12.4" height="19" viewBox="0 0 12.4 19"><path d="M9.2 0 L0.4 10.6 H5.2 L2.2 19 L12 7.4 H6.8 Z" fill="#ffffff"/></svg>
<svg style="position:absolute;left:1883.2px;top:1009.1px;" width="18" height="18" viewBox="0 0 18 18"><circle cx="8.8" cy="8.8" r="8.7" fill="#ffffff"/><ellipse cx="5.9" cy="6.0" rx="1.15" ry="1.7" fill="#705697"/><ellipse cx="11.7" cy="6.0" rx="1.15" ry="1.7" fill="#705697"/><path d="M3.9 10.2 C5.4 14.2 12.2 14.2 13.7 10.2" fill="none" stroke="#705697" stroke-width="1.7" stroke-linecap="round"/></svg>
<span class="t" style="left:27.5px;top:7.10px;font-size:15.8px;color:#000;letter-spacing:0.240px;">header-common.html — easyShopDeom — Visual Studio Code</span>
<span class="t" style="left:7.8px;top:35.30px;font-size:15.4px;color:#000;letter-spacing:-0.322px;"><span style="font-size:14.5px;">文件</span>(<u>F</u>)</span>
<span class="t" style="left:71.6px;top:35.30px;font-size:15.4px;color:#000;letter-spacing:-0.462px;"><span style="font-size:14.5px;">编辑</span>(<u>E</u>)</span>
<span class="t" style="left:134.9px;top:35.30px;font-size:15.4px;color:#000;letter-spacing:-0.212px;"><span style="font-size:14.5px;">选择</span>(<u>S</u>)</span>
<span class="t" style="left:199.2px;top:35.30px;font-size:15.4px;color:#000;letter-spacing:-0.012px;"><span style="font-size:14.5px;">查看</span>(<u>V</u>)</span>
<span class="t" style="left:265.1px;top:35.30px;font-size:15.4px;color:#000;letter-spacing:-0.116px;"><span style="font-size:14.5px;">转到</span>(<u>G</u>)</span>
<span class="t" style="left:331.3px;top:35.30px;font-size:15.4px;color:#000;letter-spacing:0.148px;"><span style="font-size:14.5px;">调试</span>(<u>D</u>)</span>
<span class="t" style="left:398.4px;top:35.30px;font-size:15.4px;color:#000;letter-spacing:0.223px;"><span style="font-size:14.5px;">帮助</span>(<u>H</u>)</span>
<span class="t" style="left:31.6px;top:216.32px;font-size:13.75px;color:#fff;letter-spacing:-1.297px;">21</span>
<span class="t" style="left:87.6px;top:71.12px;font-size:13.75px;color:#8a8a8a;letter-spacing:-0.041px;">资源管理器</span>
<span class="t" style="left:87.7px;top:106.22px;font-size:13.75px;color:#616161;letter-spacing:0.037px;">打开的编辑器</span>
<span class="t" style="left:88px;top:297.50px;font-size:13.4px;color:#616161;transform:scaleX(0.9187);transform-origin:0 50%;">EASYSHOPDEOM</span>
<span class="t" style="left:132.3px;top:130.88px;font-size:16.25px;color:#616161;letter-spacing:0.342px;">footer.html</span>
<span class="t" style="left:219.3px;top:133.00px;font-size:14.6px;color:#8e8e8e;letter-spacing:0.100px;">src\view\layout</span>
<span class="t" style="left:107.1px;top:159.30px;font-size:15.0px;color:#f2b558;font-weight:bold;transform:scaleX(0.86);transform-origin:0 50%;-webkit-text-stroke:0.4px;">JS</span>
<span class="t" style="left:132.3px;top:158.38px;font-size:16.25px;color:#616161;letter-spacing:-0.430px;">index.js</span>
<span class="t" style="left:192.5px;top:160.50px;font-size:14.6px;color:#8e8e8e;letter-spacing:0.068px;">src\page\index</span>
<span class="t" style="left:132.3px;top:185.88px;font-size:16.25px;color:#616161;letter-spacing:0.109px;">header-common.html</span>
<span class="t" style="left:295.4px;top:188.00px;font-size:14.6px;color:#8e8e8e;letter-spacing:0.135px;">src\view\layout</span>
<span class="t" style="left:107.1px;top:214.30px;font-size:15.0px;color:#f2b558;font-weight:bold;transform:scaleX(0.86);transform-origin:0 50%;-webkit-text-stroke:0.4px;">JS</span>
<span class="t" style="left:132.3px;top:213.38px;font-size:16.25px;color:#616161;letter-spacing:-0.430px;">index.js</span>
<span class="t" style="left:192.5px;top:215.50px;font-size:14.6px;color:#8e8e8e;letter-spacing:0.171px;">src\page\common</span>
<span class="t" style="left:132.3px;top:240.88px;font-size:16.25px;color:#616161;letter-spacing:-0.210px;">webpack.config.js</span>
<span class="t" style="left:132.3px;top:268.38px;font-size:16.25px;color:#616161;letter-spacing:-0.615px;font-style:italic;">package.json</span>
<span class="t" style="left:148px;top:323.25px;font-size:16.25px;color:#616161;letter-spacing:-0.241px;">image</span>
<span class="t" style="left:148px;top:350.25px;font-size:16.25px;color:#616161;letter-spacing:-0.219px;">page</span>
<span class="t" style="left:163px;top:378.25px;font-size:16.25px;color:#616161;letter-spacing:0.197px;">common</span>
<span class="t" style="left:178px;top:405.25px;font-size:16.25px;color:#616161;letter-spacing:0.328px;">footer</span>
<span class="t" style="left:178px;top:433.25px;font-size:16.25px;color:#616161;letter-spacing:-0.802px;">nav</span>
<span class="t" style="left:178px;top:460.25px;font-size:16.25px;color:#616161;letter-spacing:-0.109px;">nav-smiple</span>
<span class="t" style="left:178.2px;top:488.25px;font-size:16.25px;color:#616161;letter-spacing:-0.748px;">_mixin.scss</span>
<span class="t" style="left:152.8px;top:516.00px;font-size:15.0px;color:#f2b558;font-weight:bold;transform:scaleX(0.86);transform-origin:0 50%;-webkit-text-stroke:0.4px;">JS</span>
<span class="t" style="left:178.2px;top:515.25px;font-size:16.25px;color:#616161;letter-spacing:-0.430px;">index.js</span>
<span class="t" style="left:178.2px;top:543.25px;font-size:16.25px;color:#616161;letter-spacing:-0.539px;">layout.scss</span>
<span class="t" style="left:163px;top:570.25px;font-size:16.25px;color:#616161;letter-spacing:-0.215px;">index</span>
<span class="t" style="left:152.8px;top:599.00px;font-size:15.0px;color:#f2b558;font-weight:bold;transform:scaleX(0.86);transform-origin:0 50%;-webkit-text-stroke:0.4px;">JS</span>
<span class="t" style="left:178.2px;top:598.25px;font-size:16.25px;color:#616161;letter-spacing:-0.430px;">index.js</span>
<span class="t" style="left:178.2px;top:625.25px;font-size:16.25px;color:#616161;letter-spacing:-0.697px;">index.scss</span>
<span class="t" style="left:148px;top:653.25px;font-size:16.25px;color:#616161;letter-spacing:-0.581px;">service</span>
<span class="t" style="left:148px;top:680.25px;font-size:16.25px;color:#616161;letter-spacing:0.432px;">unit</span>
<span class="t" style="left:148px;top:708.25px;font-size:16.25px;color:#616161;letter-spacing:-0.305px;">view</span>
<span class="t" style="left:163px;top:735.25px;font-size:16.25px;color:#616161;letter-spacing:0.065px;">layout</span>
<span class="t" style="left:178.2px;top:763.25px;font-size:16.25px;color:#616161;letter-spacing:0.342px;">footer.html</span>
<span class="t" style="left:178.2px;top:790.25px;font-size:16.25px;color:#616161;letter-spacing:0.109px;">header-common.html</span>
<span class="t" style="left:178.2px;top:818.25px;font-size:16.25px;color:#616161;letter-spacing:-0.028px;">nav-smiple.html</span>
<span class="t" style="left:178.2px;top:845.25px;font-size:16.25px;color:#616161;letter-spacing:-0.003px;">nav.html</span>
<span class="t" style="left:163.2px;top:873.25px;font-size:16.25px;color:#616161;letter-spacing:-0.029px;">index.html</span>
<span class="t" style="left:132.3px;top:900.25px;font-size:16.25px;color:#616161;letter-spacing:0.216px;">.gitignore</span>
<span class="t" style="left:132.3px;top:928.25px;font-size:16.25px;color:#616161;letter-spacing:-0.342px;">package.json</span>
<span class="t" style="left:132.3px;top:955.25px;font-size:16.25px;color:#616161;transform:scaleX(0.9169);transform-origin:0 50%;">README.md</span>
<span class="t" style="left:132.3px;top:983.25px;font-size:16.25px;color:#616161;letter-spacing:-0.210px;">webpack.config.js</span>
<span class="t" style="left:435px;top:68.47px;font-size:16.25px;color:#8b8b8b;letter-spacing:0.342px;">footer.html</span>
<span class="t" style="left:566.5px;top:66.40px;font-size:15.0px;color:#f3b860;font-weight:bold;transform:scaleX(0.86);transform-origin:0 50%;-webkit-text-stroke:0.4px;">JS</span>
<span class="t" style="left:592px;top:68.47px;font-size:16.25px;color:#8b8b8b;letter-spacing:-0.430px;">index.js</span>
<span class="t" style="left:652px;top:69.70px;font-size:14.6px;color:#b0b0b0;letter-spacing:-0.014px;">...\index</span>
<span class="t" style="left:780.7px;top:68.47px;font-size:16.25px;color:#333333;letter-spacing:0.097px;">header-common.html</span>
<span class="t" style="left:988.7px;top:66.40px;font-size:15.0px;color:#f3b860;font-weight:bold;transform:scaleX(0.86);transform-origin:0 50%;-webkit-text-stroke:0.4px;">JS</span>
<span class="t" style="left:1013.75px;top:68.47px;font-size:16.25px;color:#8b8b8b;letter-spacing:-0.430px;">index.js</span>
<span class="t" style="left:1074px;top:69.70px;font-size:14.6px;color:#b0b0b0;letter-spacing:0.090px;">...\common</span>
<span class="t" style="left:1224px;top:68.47px;font-size:16.25px;color:#8b8b8b;letter-spacing:-0.160px;">webpack.config.js</span>
<span class="t" style="left:1427.2px;top:68.47px;font-size:16.25px;color:#8b8b8b;letter-spacing:-0.606px;font-style:italic;">package.json</span>
<span class="t" style="left:486.17903px;top:103.80px;font-size:19.4px;color:#333;font-family:'Liberation Mono','Noto Sans CJK SC',monospace;letter-spacing:-0.642px;"><span style="color:#91b3e0;">&lt;</span><span style="color:#4b83cd;">meta</span> <span style="color:#91b3e0;font-style:italic;">charset</span><span style="color:#91b3e0;">=</span><span style="color:#777777;">"</span><span style="color:#448c27;">UTF-8</span><span style="color:#777777;">"</span><span style="color:#91b3e0;">&gt;</span></span>
<span class="t" style="left:442.17903px;top:103.80px;font-size:19.4px;color:#9da39a;font-family:'Liberation Mono','Noto Sans CJK SC',monospace;">1</span>
<span class="t" style="left:486.17903px;top:130.80px;font-size:19.4px;color:#333;font-family:'Liberation Mono','Noto Sans CJK SC',monospace;letter-spacing:-0.642px;"><span style="color:#91b3e0;">&lt;</span><span style="color:#4b83cd;">meta</span> <span style="color:#91b3e0;font-style:italic;">name</span><span style="color:#91b3e0;">=</span><span style="color:#777777;">"</span><span style="color:#448c27;">viewport</span><span style="color:#777777;">"</span> <span style="color:#91b3e0;font-style:italic;">content</span><span style="color:#91b3e0;">=</span><span style="color:#777777;">"</span><span style="color:#448c27;">width=device-width, initial-scale=1.0</span><span style="color:#777777;">"</span><span style="color:#91b3e0;">&gt;</span></span>
<span class="t" style="left:442.17903px;top:130.80px;font-size:19.4px;color:#9da39a;font-family:'Liberation Mono','Noto Sans CJK SC',monospace;">2</span>
<span class="t" style="left:486.17903px;top:158.80px;font-size:19.4px;color:#333;font-family:'Liberation Mono','Noto Sans CJK SC',monospace;letter-spacing:-0.642px;"><span style="color:#91b3e0;">&lt;</span><span style="color:#4b83cd;">meta</span> <span style="color:#91b3e0;font-style:italic;">http-equiv</span><span style="color:#91b3e0;">=</span><span style="color:#777777;">"</span><span style="color:#448c27;">X-UA-Compatible</span><span style="color:#777777;">"</span> <span style="color:#91b3e0;font-style:italic;">content</span><span style="color:#91b3e0;">=</span><span style="color:#777777;">"</span><span style="color:#448c27;">ie=edge</span><span style="color:#777777;">"</span><span style="color:#91b3e0;">&gt;</span></span>
<span class="t" style="left:442.17903px;top:158.80px;font-size:19.4px;color:#9da39a;font-family:'Liberation Mono','Noto Sans CJK SC',monospace;">3</span>
<span class="t" style="left:486.17903px;top:185.80px;font-size:19.4px;color:#333;font-family:'Liberation Mono','Noto Sans CJK SC',monospace;letter-spacing:-0.642px;"><span style="color:#91b3e0;">&lt;</span><span style="color:#4b83cd;">meta</span> <span style="color:#91b3e0;font-style:italic;">name</span><span style="color:#91b3e0;">=</span><span style="color:#777777;">"</span><span style="color:#448c27;">keywords</span><span style="color:#777777;">"</span> <span style="color:#91b3e0;font-style:italic;">content</span><span style="color:#91b3e0;">=</span><span style="color:#777777;">"</span><span style="color:#777777;">"</span><span style="color:#91b3e0;">&gt;</span></span>
<span class="t" style="left:442.17903px;top:185.80px;font-size:19.4px;color:#9da39a;font-family:'Liberation Mono','Noto Sans CJK SC',monospace;">4</span>
<span class="t" style="left:486.17903px;top:213.80px;font-size:19.4px;color:#333;font-family:'Liberation Mono','Noto Sans CJK SC',monospace;letter-spacing:-0.642px;"><span style="color:#91b3e0;">&lt;</span><span style="color:#4b83cd;">meta</span> <span style="color:#91b3e0;font-style:italic;">name</span><span style="color:#91b3e0;">=</span><span style="color:#777777;">"</span><span style="color:#448c27;">discription</span><span style="color:#777777;">"</span> <span style="color:#91b3e0;font-style:italic;">content</span><span style="color:#91b3e0;">=</span><span style="color:#777777;">"</span><span style="color:#777777;">"</span><span style="color:#91b3e0;">&gt;</span></span>
<span class="t" style="left:442.17903px;top:213.80px;font-size:19.4px;color:#9da39a;font-family:'Liberation Mono','Noto Sans CJK SC',monospace;">5</span>
<span class="t" style="left:486.17903px;top:240.80px;font-size:19.4px;color:#333;font-family:'Liberation Mono','Noto Sans CJK SC',monospace;letter-spacing:-0.642px;"><span style="color:#91b3e0;">&lt;</span><span style="color:#4b83cd;">link</span> <span style="color:#91b3e0;font-style:italic;">rel</span><span style="color:#91b3e0;">=</span><span style="color:#777777;">"</span><span style="color:#448c27;">stylesheet</span><span style="color:#777777;">"</span> <span style="color:#91b3e0;font-style:italic;">type</span><span style="color:#91b3e0;">=</span><span style="color:#777777;">"</span><span style="color:#777777;">"</span> <span style="color:#91b3e0;font-style:italic;">href</span><span style="color:#91b3e0;">=</span><span style="color:#777777;">"</span><span style="color:#448c27;text-decoration:underline;text-underline-offset:1.2px;text-decoration-thickness:1.8px;">../../font/font-awesome.min.css</span><span style="color:#777777;">"</span><span style="color:#91b3e0;">&gt;</span></span>
<span class="t" style="left:442.17903px;top:240.80px;font-size:19.4px;color:#9da39a;font-family:'Liberation Mono','Noto Sans CJK SC',monospace;">6</span>
<span class="t" style="left:34.2px;top:1009.40px;font-size:15px;color:#ffffff;letter-spacing:-0.177px;">dev*</span>
<span class="t" style="left:131px;top:1009.40px;font-size:15px;color:#ffffff;">0</span>
<span class="t" style="left:164px;top:1009.40px;font-size:15px;color:#ffffff;">0</span>
<span class="t" style="left:193.8px;top:1009.40px;font-size:15px;color:#ffffff;transform:scaleX(0.9062);transform-origin:0 50%;">TODO:s</span>
<span class="t" style="left:1478.5px;top:1009.40px;font-size:15px;color:#ffffff;letter-spacing:-0.129px;">行 6<span style="position:relative;left:3px;">，</span>列 38 (已选择31)</span>
<span class="t" style="left:1649px;top:1009.40px;font-size:15px;color:#ffffff;letter-spacing:-0.172px;">空格: 4</span>
<span class="t" style="left:1714px;top:1009.40px;font-size:15px;color:#ffffff;transform:scaleX(0.9412);transform-origin:0 50%;">UTF-8</span>
<span class="t" style="left:1771.6px;top:1009.40px;font-size:15px;color:#ffffff;transform:scaleX(0.8527);transform-origin:0 50%;">CRLF</span>
<span class="t" style="left:1823.9px;top:1009.40px;font-size:15px;color:#ffffff;transform:scaleX(0.9598);transform-origin:0 50%;">HTML</span>
</body></html>
